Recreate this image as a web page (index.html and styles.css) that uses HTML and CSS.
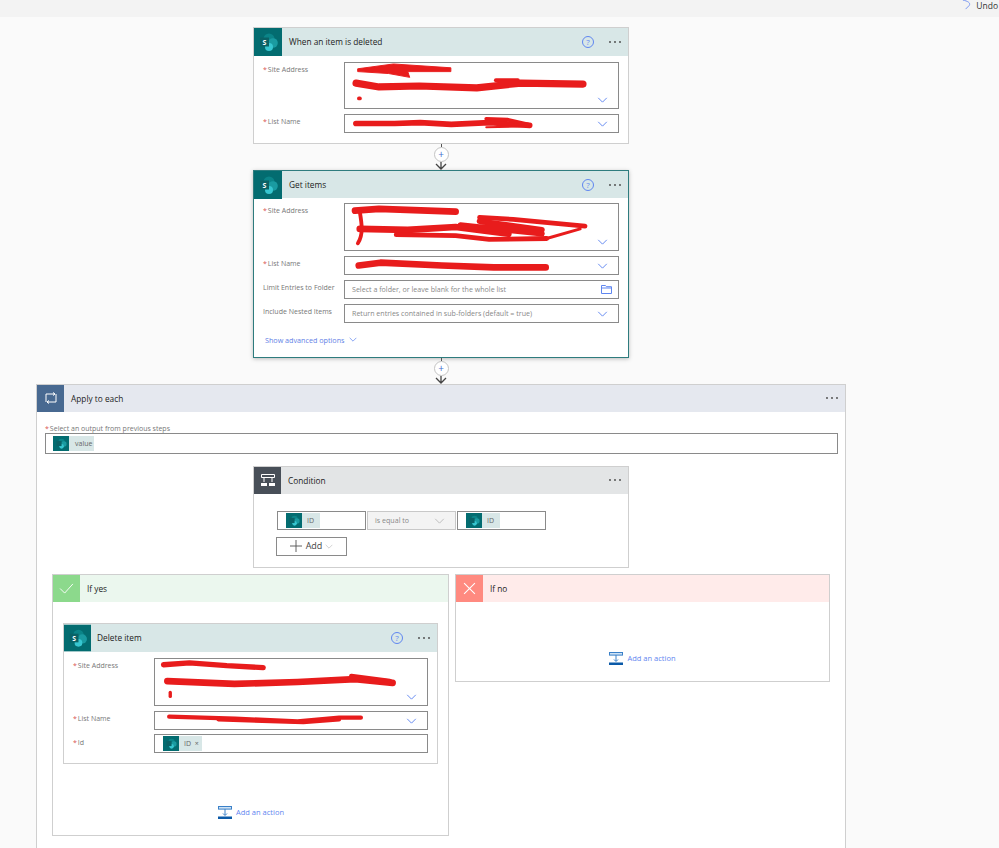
FILE: index.html
```html
<!DOCTYPE html>
<html>
<head>
<meta charset="utf-8">
<title>Flow</title>
<link rel="stylesheet" href="styles.css">
</head>
<body>
<svg class="defs" width="0" height="0">
  <symbol id="sp" viewBox="0 0 28 28">
    <rect width="28" height="28" fill="#036c70"/>
    <circle cx="15" cy="11" r="5.500" fill="#0b8488"/>
    <circle cx="19" cy="15" r="4.800" fill="#1a9ba1"/>
    <circle cx="15" cy="19" r="4" fill="#37c6d0"/>
    <rect x="6" y="9.500" width="9" height="9" fill="#0a6266"/>
  </symbol>
  <symbol id="chev" viewBox="0 0 12 7">
    <path d="M1 1l5 5 5-5" fill="none" stroke="#5f86f0" stroke-width="1.100"/>
  </symbol>
  <symbol id="dots" viewBox="0 0 14 4">
    <circle cx="2" cy="2" r=".9" fill="#444"/><circle cx="7" cy="2" r=".9" fill="#444"/><circle cx="12" cy="2" r=".9" fill="#444"/>
  </symbol>
  <symbol id="addact" viewBox="0 0 14 13">
    <rect x=".5" y=".5" width="13" height="2.600" fill="#cfe3f5" stroke="#3a80c8"/>
    <path d="M7 3v6M5 7.500l2 2 2-2" fill="none" stroke="#3a80c8"/>
    <rect y="10.500" width="14" height="2.500" fill="#0b5aa8"/>
  </symbol>
</svg>

<div class="topbar">
  <svg class="undo-icon" viewBox="0 0 10 12"><path d="M1 0C6 1 10 3 8 6L4 10" fill="none" stroke="#6f8ff0"/></svg>
  <span class="undo">Undo</span>
</div>

<div class="canvas">

  <section class="card card-sp">
    <header class="head head-sp">
      <svg class="logo" viewBox="0 0 28 28"><use href="#sp"/><text x="10.500" y="16.600" class="sp-letter">S</text></svg>
      <span class="title">When an item is deleted</span>
      <span class="help">?</span>
      <svg class="more"><use href="#dots"/></svg>
    </header>
    <div class="body">
      <div class="row">
        <span class="lbl"><i>*</i>Site Address</span>
        <div class="field tall">
          <svg class="scrib" viewBox="0 0 274 47">
            <path class="blob" d="M8 6L45 1 105 5 105 9 60 9 62 15 40 11 8 9z" stroke-width="1"/>
            <path d="M6 21L30 25 72 24 132 26 178 21 243 22" stroke-width="7.500"/>
            <path d="M152 18L175 18" stroke-width="4"/>
            <path d="M9 37h1" stroke-width="4"/>
          </svg>
          <svg class="chev"><use href="#chev"/></svg>
        </div>
      </div>
      <div class="row">
        <span class="lbl"><i>*</i>List Name</span>
        <div class="field">
          <svg class="scrib" viewBox="0 0 274 18">
            <path d="M4 9L45 9 72 8 105 10 145 8 188 11" stroke-width="6"/>
            <path d="M142 4L165 5 186 10" stroke-width="4"/>
            <path d="M142 13L186 12" stroke-width="2"/>
          </svg>
          <svg class="chev"><use href="#chev"/></svg>
        </div>
      </div>
    </div>
  </section>

  <div class="link">
    <span class="plus">+</span>
    <svg class="arrow" viewBox="0 0 12 8"><path d="M6 0v7M1 2l5 5 5-5" fill="none" stroke="#444" stroke-width="1.300"/></svg>
  </div>

  <section class="card card-sp card-active">
    <header class="head head-sp">
      <svg class="logo" viewBox="0 0 28 28"><use href="#sp"/><text x="10.500" y="16.600" class="sp-letter">S</text></svg>
      <span class="title">Get items</span>
      <span class="help">?</span>
      <svg class="more"><use href="#dots"/></svg>
    </header>
    <div class="body">
      <div class="row">
        <span class="lbl"><i>*</i>Site Address</span>
        <div class="field tall">
          <svg class="scrib" viewBox="0 0 274 48">
            <path d="M5 7L30 5 110 8" stroke-width="7"/>
            <path d="M10 8C12 20 14 32 8 41" stroke-width="4"/>
            <path d="M10 26L60 27 110 24 165 31" stroke-width="7"/>
            <path d="M48 32L110 33 145 37 205 36" stroke-width="5"/>
            <path d="M135 14L170 16 245 23" stroke-width="5"/>
            <path d="M115 22L200 31M135 18L200 27" stroke-width="6"/>
            <path d="M205 36L240 26" stroke-width="3"/>
          </svg>
          <svg class="chev"><use href="#chev"/></svg>
        </div>
      </div>
      <div class="row">
        <span class="lbl"><i>*</i>List Name</span>
        <div class="field">
          <svg class="scrib" viewBox="0 0 274 18">
            <path d="M7 9L30 6 95 9 150 11 205 11" stroke-width="7"/>
          </svg>
          <svg class="chev"><use href="#chev"/></svg>
        </div>
      </div>
      <div class="row">
        <span class="lbl">Limit Entries to Folder</span>
        <div class="field">
          <span class="hint">Select a folder, or leave blank for the whole list</span>
          <svg class="folder" viewBox="0 0 11 9"><path d="M.5 8.500v-8h4l1 1.200h5v6.800zM.5 3h10" fill="none" stroke="#5f86f0"/></svg>
        </div>
      </div>
      <div class="row">
        <span class="lbl">Include Nested Items</span>
        <div class="field">
          <span class="hint">Return entries contained in sub-folders (default = true)</span>
          <svg class="chev"><use href="#chev"/></svg>
        </div>
      </div>
      <div class="advanced">Show advanced options <svg class="chev-sm"><use href="#chev"/></svg></div>
    </div>
  </section>

  <div class="link">
    <span class="plus">+</span>
    <svg class="arrow" viewBox="0 0 12 8"><path d="M6 0v7M1 2l5 5 5-5" fill="none" stroke="#444" stroke-width="1.300"/></svg>
  </div>

  <section class="card card-loop">
    <header class="head head-loop">
      <span class="glyph glyph-loop">
        <svg viewBox="0 0 14 12"><path d="M2 10V2h9M9 .5l2 1.500-2 1.500M12 2v8H3M5 8.500L3 10l2 1.500" fill="none" stroke="#fff"/></svg>
      </span>
      <span class="title">Apply to each</span>
      <svg class="more"><use href="#dots"/></svg>
    </header>
    <div class="loop-body">
      <div class="lbl-top"><i>*</i>Select an output from previous steps</div>
      <div class="field field-wide">
        <span class="token"><svg class="token-logo" viewBox="0 0 28 28" preserveAspectRatio="xMidYMid slice"><use href="#sp"/></svg><span class="token-text token-value">value</span></span>
      </div>

      <section class="card card-cond">
        <header class="head head-cond">
          <span class="glyph glyph-cond">
            <svg viewBox="0 0 16 14"><path d="M1.500 1.500h13v3h-13zM4 4.500V9M12 4.500V9" fill="none" stroke="#fff"/><path d="M1 10h6v3H1zM9 10h6v3H9z" fill="#fff"/></svg>
          </span>
          <span class="title">Condition</span>
          <svg class="more"><use href="#dots"/></svg>
        </header>
        <div class="cond-body">
          <div class="cond-row">
            <div class="field cond-field"><span class="token"><svg class="token-logo" viewBox="0 0 28 28" preserveAspectRatio="xMidYMid slice"><use href="#sp"/></svg><span class="token-text">ID</span></span></div>
            <div class="field cond-field cond-op"><span class="hint">is equal to</span><svg class="chev chev-grey"><use href="#chev"/></svg></div>
            <div class="field cond-field"><span class="token"><svg class="token-logo" viewBox="0 0 28 28" preserveAspectRatio="xMidYMid slice"><use href="#sp"/></svg><span class="token-text">ID</span></span></div>
          </div>
          <div class="add-btn">
            <svg class="add-plus" viewBox="0 0 13 13"><path d="M6.500 0v13M0 6.500h13" stroke="#555"/></svg>
            Add
            <svg class="chev-sm chev-grey"><use href="#chev"/></svg>
          </div>
        </div>
      </section>

      <div class="branches">
        <section class="branch branch-yes">
          <header class="head head-yes">
            <span class="glyph glyph-yes"><svg viewBox="0 0 16 12"><path d="M1 6l5 5L15 1" fill="none" stroke="#fff"/></svg></span>
            <span class="title">If yes</span>
          </header>
          <div class="branch-body">
            <section class="card card-del">
              <header class="head head-sp">
                <svg class="logo" viewBox="0 0 28 28"><use href="#sp"/><text x="10.500" y="16.600" class="sp-letter">S</text></svg>
                <span class="title">Delete item</span>
                <span class="help">?</span>
                <svg class="more"><use href="#dots"/></svg>
              </header>
              <div class="body">
                <div class="row">
                  <span class="lbl"><i>*</i>Site Address</span>
                  <div class="field tall">
                    <svg class="scrib" viewBox="0 0 274 48">
                      <path d="M4 6L31 4 70 7 108 9" stroke-width="5.500"/>
                      <path d="M8 23L78 26 144 24 204 21 243 25" stroke-width="7"/>
                      <path d="M200 18L240 23" stroke-width="5"/>
                      <path d="M11 35v4" stroke-width="3.500"/>
                    </svg>
                    <svg class="chev"><use href="#chev"/></svg>
                  </div>
                </div>
                <div class="row">
                  <span class="lbl"><i>*</i>List Name</span>
                  <div class="field">
                    <svg class="scrib" viewBox="0 0 274 18">
                      <path d="M8 5L78 7 144 10 188 6 211 6" stroke-width="4.500"/>
                      <path d="M60 8L150 11 188 8" stroke-width="4"/>
                    </svg>
                    <svg class="chev"><use href="#chev"/></svg>
                  </div>
                </div>
                <div class="row">
                  <span class="lbl"><i>*</i>Id</span>
                  <div class="field field-id">
                    <span class="token"><svg class="token-logo" viewBox="0 0 28 28" preserveAspectRatio="xMidYMid slice"><use href="#sp"/></svg><span class="token-text token-close">ID <b>×</b></span></span>
                  </div>
                </div>
              </div>
            </section>
            <div class="add-action add-action-yes"><svg class="addact"><use href="#addact"/></svg>Add an action</div>
          </div>
        </section>

        <section class="branch branch-no">
          <header class="head head-no">
            <span class="glyph glyph-no"><svg viewBox="0 0 12 12"><path d="M1 1l10 10M11 1L1 11" fill="none" stroke="#fff"/></svg></span>
            <span class="title">If no</span>
          </header>
          <div class="add-action add-action-no"><svg class="addact"><use href="#addact"/></svg>Add an action</div>
        </section>
      </div>
    </div>
  </section>

</div>
</body>
</html>
```

FILE: styles.css
```css
html, body {
  margin: 0;
  height: 848px;
  overflow: hidden;
}
body {
  background: #fafafa;
  color: #333;
  font: 8px/1.2 "Open Sans", "Noto Sans", sans-serif;
}
i {
  color: #d9534f;
  font-style: normal;
  margin-right: 1px;
}
.defs {
  display: block;
  height: 0;
}
.sp-letter {
  fill: #fff;
  font: bold 7px "Open Sans", sans-serif;
  text-anchor: middle;
}

.topbar {
  height: 17px;
  background: #f3f3f3;
  display: flex;
  justify-content: flex-end;
  align-items: flex-start;
  gap: 5px;
}
.undo {
  font-size: 8.500px;
  line-height: 11px;
  margin-right: 1px;
}
.undo-icon {
  width: 9px;
  height: 11px;
}

.canvas {
  box-sizing: border-box;
  width: 882px;
  height: 831px;
  overflow: hidden;
  padding-top: 10px;
  display: flex;
  flex-direction: column;
  align-items: center;
}

.card {
  box-sizing: border-box;
  width: 376px;
  background: #fff;
  border: 1px solid #cfcfcf;
}
.card-active {
  border-color: #2e7c7e;
  box-shadow: 0 1px 4px rgba(0, 0, 0, .25);
}
.card-loop {
  width: 810px;
  height: 520px;
  flex-shrink: 0;
}
.card-del {
  width: 375px;
}

.head {
  height: 28px;
  display: flex;
  align-items: center;
}
.head-sp { background: #d8e7e7; }
.head-loop { background: #e5e8ef; height: 27px; }
.head-cond { background: #e3e5e6; height: 27px; }
.head-yes { background: #ebf7ee; height: 27px; }
.head-no { background: #ffebea; height: 27px; }
.card-active .head { height: 27px; }
.head-loop .title, .head-cond .title, .head-yes .title, .head-no .title {
  padding-top: 2px;
}

.logo {
  width: 28px;
  height: 28px;
  flex-shrink: 0;
}
.card-del .logo { width: 27px; }
.card-del .title { margin-left: 6px; }
.glyph {
  width: 27px;
  height: 27px;
  display: flex;
  align-items: center;
  justify-content: center;
}
.glyph-loop { background: #486991; }
.glyph-loop svg { width: 14px; height: 12px; }
.glyph-cond { background: #484f58; }
.glyph-cond svg { width: 16px; height: 14px; }
.glyph-yes { background: #8cd98c; }
.glyph-yes svg { width: 15px; height: 11px; }
.glyph-no { background: #ff8a80; }
.glyph-no svg { width: 13px; height: 13px; }

.title {
  flex: 1;
  margin-left: 7px;
  color: #222;
  font-size: 8.300px;
}
.help {
  width: 10px;
  height: 10px;
  border: 1px solid #5f86f0;
  border-radius: 50%;
  color: #5f86f0;
  font-size: 8px;
  line-height: 10px;
  text-align: center;
  margin-right: 14px;
}
.more {
  width: 14px;
  height: 4px;
  margin-right: 6px;
}

.body {
  padding: 6px 9px 10px;
  display: flex;
  flex-direction: column;
  gap: 5px;
}
.card-active .body {
  padding-top: 5px;
}
.row {
  display: flex;
}
.lbl {
  width: 81px;
  flex-shrink: 0;
  padding-top: 4px;
  color: #777;
  font-size: 7px;
}
.lbl-top {
  color: #777;
  font-size: 7px;
  line-height: 9px;
  margin-top: 12px;
}

.field {
  box-sizing: border-box;
  position: relative;
  flex: 1;
  height: 19px;
  background: #fff;
  border: 1px solid #8a8a8a;
  display: flex;
  align-items: center;
}
.tall {
  height: 47px;
}
.card-active .tall, .card-del .tall {
  height: 48px;
}
.field-wide {
  width: 793px;
  height: 21px;
  flex: none;
  padding-left: 7px;
}
.field-id {
  padding-left: 8px;
  margin-top: -1px;
}
.hint {
  color: #888;
  font-size: 7.100px;
  padding-left: 7px;
  white-space: nowrap;
}
.scrib {
  position: absolute;
  left: 0;
  top: 0;
  width: 100%;
  height: 100%;
  fill: none;
  stroke: #e81c1c;
  stroke-linecap: round;
  stroke-linejoin: round;
}
.blob {
  fill: #e81c1c;
}
.chev {
  position: absolute;
  right: 10px;
  bottom: 5px;
  width: 11px;
  height: 6px;
}
.chev-sm {
  width: 8px;
  height: 5px;
  margin-left: 3px;
  vertical-align: 1px;
}
.chev-grey {
  opacity: .5;
  filter: grayscale(1);
}
.folder {
  position: absolute;
  right: 6px;
  top: 4px;
  width: 11px;
  height: 9px;
}
.advanced {
  color: #5f7fe6;
  font-size: 7.200px;
  margin: 8px 0 2px 2px;
}

.link {
  height: 26px;
  width: 20px;
  flex-shrink: 0;
  display: flex;
  flex-direction: column;
  align-items: center;
}
.link::before {
  content: "";
  width: 1px;
  height: 3px;
  background: #555;
  flex-shrink: 0;
}
.plus {
  box-sizing: border-box;
  width: 15px;
  height: 15px;
  background: #fff;
  border: 1px solid #c4c4c4;
  border-radius: 50%;
  color: #3f6fd0;
  font-size: 10px;
  line-height: 12px;
  text-align: center;
  flex-shrink: 0;
}
.arrow {
  width: 12px;
  height: 8px;
  flex-shrink: 0;
}

.loop-body {
  padding: 0 7px 0 8px;
  display: flex;
  flex-direction: column;
  align-items: flex-start;
}
.token {
  display: flex;
  align-items: stretch;
  height: 15px;
  background: #d8e7e7;
}
.token-logo {
  width: 16px;
  height: 15px;
}
.token-text {
  padding: 0 6px 0 5px;
  color: #666;
  font-size: 7px;
  line-height: 15px;
}
.token-value {
  padding-right: 2px;
  padding-left: 6px;
}
.token-close {
  padding-right: 3px;
}
.token-close b {
  font-weight: normal;
  margin-left: 2px;
}

.card-cond {
  width: 376px;
  margin: 12px 0 6px 208px;
}
.cond-body {
  padding: 17px 0 11px 23px;
}
.cond-row {
  display: flex;
  gap: 1px;
}
.cond-field {
  flex: none;
  width: 89px;
  padding-left: 8px;
}
.cond-op {
  background: #f3f3f3;
  border-color: #c8c8c8;
  padding-left: 0;
}
.add-btn {
  box-sizing: border-box;
  width: 71px;
  height: 19px;
  margin: 7px 0 0 -1px;
  border: 1px solid #8a8a8a;
  color: #444;
  display: flex;
  align-items: center;
  justify-content: center;
  font-size: 9px;
}
.add-plus {
  width: 12px;
  height: 12px;
  margin-right: 4px;
}

.branches {
  display: flex;
  gap: 6px;
  margin-left: 7px;
  align-items: flex-start;
}
.branch {
  box-sizing: border-box;
  background: #fff;
  border: 1px solid #cfcfcf;
}
.branch-yes {
  width: 397px;
  height: 262px;
}
.branch-no {
  width: 375px;
  height: 108px;
}
.branch-body {
  padding: 21px 10px 0;
}
.add-action {
  display: flex;
  align-items: center;
  justify-content: center;
  gap: 4px;
  color: #5f86f0;
  font-size: 7.500px;
}
.add-action-yes {
  margin-top: 42px;
  padding-left: 1px;
}
.add-action-no {
  margin-top: 50px;
}
.addact {
  width: 14px;
  height: 13px;
}
```
